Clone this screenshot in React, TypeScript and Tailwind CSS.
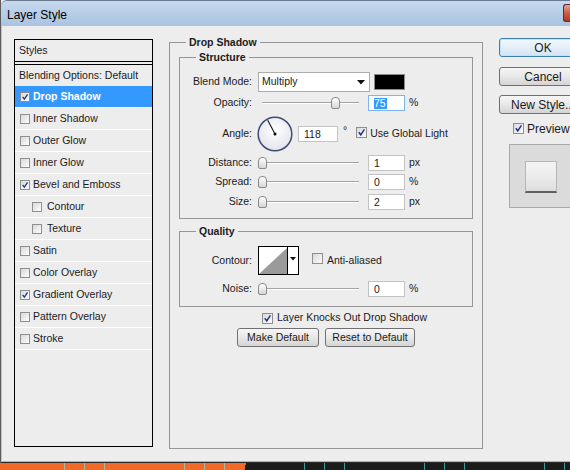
import React from "react";

type StyleRow = { label: string; checked?: boolean; indent?: boolean; active?: boolean };

const styleRows: StyleRow[] = [
  { label: "Drop Shadow", checked: true, active: true },
  { label: "Inner Shadow" },
  { label: "Outer Glow" },
  { label: "Inner Glow" },
  { label: "Bevel and Emboss", checked: true },
  { label: "Contour", indent: true },
  { label: "Texture", indent: true },
  { label: "Satin" },
  { label: "Color Overlay" },
  { label: "Gradient Overlay", checked: true },
  { label: "Pattern Overlay" },
  { label: "Stroke" },
];

function Check({ checked, big }: { checked?: boolean; big?: boolean }) {
  return (
    <span
      className={`inline-flex shrink-0 items-center justify-center border border-[#8e8f8f] bg-linear-to-br from-[#d9d9d9] to-[#fdfdfd] ${
        big ? "w-[11px] h-[11px]" : "w-[10px] h-[10px]"
      }`}
    >
      {checked && (
        <svg viewBox="0 0 10 10" className="w-full h-full">
          <path d="M2 4.8 L4.2 7.6 L8.2 1.6" stroke="#22378a" strokeWidth="1.7" fill="none" />
        </svg>
      )}
    </span>
  );
}

function Slider({ pos }: { pos: number }) {
  return (
    <div className="relative w-[104px] h-[16px] shrink-0">
      <div className="absolute left-[4px] right-[3px] top-[7px] h-[2px] border-t border-[#a3a3a3] border-b border-b-white" />
      <div
        className="absolute top-[2px] w-[9px] h-[12px] rounded-t-[4px] rounded-b-[2px] border border-[#8a8a8a] bg-linear-to-b from-white to-[#d6d6d6]"
        style={{ left: pos }}
      />
    </div>
  );
}

function Field({ children, w = "w-[37px]" }: { children: React.ReactNode; w?: string }) {
  return (
    <div className={`${w} h-[16px] shrink-0 border border-[#c3c3c3] bg-white pl-[5px] leading-[14px]`}>
      {children}
    </div>
  );
}

function Label({ children }: { children: React.ReactNode }) {
  return <div className="w-[72px] shrink-0 text-right mr-[6px]">{children}</div>;
}

function SliderRow({ label, pos, value, unit, className }: { label: string; pos: number; value: string; unit: string; className: string }) {
  return (
    <div className={`flex items-center h-[16px] ${className}`}>
      <Label>{label}</Label>
      <Slider pos={pos} />
      <div className="ml-[6px]">
        <Field>{value}</Field>
      </div>
      <span className="ml-[4px]">{unit}</span>
    </div>
  );
}

function Button({ children, primary, className = "" }: { children: React.ReactNode; primary?: boolean; className?: string }) {
  return (
    <div
      className={`h-[19px] rounded-[3px] border flex items-center justify-center whitespace-nowrap ${
        primary
          ? "border-[#3c7fb1] bg-linear-to-b from-[#f2f8fd] via-[#e4eff9] to-[#d3e4f3] shadow-[inset_0_0_0_1px_#bfe3f8]"
          : "border-[#707070] bg-linear-to-b from-[#f6f6f6] via-[#e8e8e8] to-[#d4d4d4]"
      } ${className}`}
    >
      {children}
    </div>
  );
}

function BottomStrip() {
  const light = [64, 84, 104, 184, 204, 224];
  const dark = [304, 324, 344, 424, 444, 464, 544, 564];
  return (
    <svg width="570" height="7" className="block">
      <rect x="0" y="0" width="245" height="7" fill="#f26a2a" />
      <rect x="245" y="0" width="325" height="7" fill="#1b1b1b" />
      <rect x="243" y="0" width="3" height="2" fill="#f26a2a" />
      {light.map((x) => (
        <rect key={x} x={x} y="0" width="1" height="7" fill="#a9b9a6" />
      ))}
      {dark.map((x) => (
        <rect key={x} x={x} y="0" width="1" height="7" fill="#3b9c98" />
      ))}
    </svg>
  );
}

export default function App() {
  return (
    <div className="w-[570px] h-[470px] overflow-hidden bg-[#ededed] text-[10.5px] text-[#1b1b1b] font-['Liberation_Sans',Arial,sans-serif]">
      <div className="border-l border-[#5c5c5c] h-[463px] flex flex-col">
        {/* Title bar */}
        <div className="h-[26px] shrink-0 flex items-start border-t border-[#6a7b90] rounded-tl-[6px] bg-linear-to-b from-[#c6d9ee] to-[#a9c3e0]">
          <span className="ml-[6px] mt-[5px] text-[12px] text-black">Layer Style</span>
          <div className="ml-auto mt-[3px] w-[7px] h-[18px] shrink-0 rounded-l-[3px] border border-r-0 border-[#5e2b2b] bg-linear-to-b from-[#e7a294] via-[#d25a45] to-[#b8321f]" />
        </div>

        {/* Body */}
        <div className="flex-1 flex items-start pl-[12px] border-l border-[#a9c9e8] border-b border-b-[#7cc4e4]">
          {/* Styles list */}
          <div className="mt-[13px] w-[139px] h-[408px] shrink-0 border border-black bg-[#ededed]">
            <div className="h-[22px] border-b border-black pl-[4px] flex items-center">Styles</div>
            <div className="h-[2px]" />
            <div className="h-[22px] border-t border-black pl-[4px] flex items-center">Blending Options: Default</div>
            {styleRows.map((r) => (
              <div
                key={r.label}
                className={`h-[22px] flex items-center border-b border-white ${r.indent ? "pl-[17px]" : "pl-[5px]"} ${
                  r.active ? "bg-[#3399ff] text-white font-bold" : ""
                }`}
              >
                <Check checked={r.checked} />
                <span className={r.indent ? "ml-[5px]" : "ml-[3px]"}>{r.label}</span>
              </div>
            ))}
          </div>

          {/* Drop Shadow */}
          <fieldset className="ml-[16px] mt-[9px] w-[314px] h-[414px] shrink-0 border border-[#959595] px-[9px] pt-[1px]">
            <legend className="ml-[7px] px-[3px] font-bold leading-[14px]">Drop Shadow</legend>

            <fieldset className="border border-[#959595] pt-[8px] pb-[8px]">
              <legend className="ml-[16px] px-[3px] font-bold leading-[14px]">Structure</legend>

              <div className="flex items-center h-[20px]">
                <Label>Blend Mode:</Label>
                <div className="w-[112px] h-[20px] border border-[#acacac] bg-white flex items-center pl-[3px]">
                  <span className="flex-1">Multiply</span>
                  <svg width="8" height="5" className="mr-[4px]">
                    <path d="M0 0 L8 0 L4 4.5 Z" fill="#111" />
                  </svg>
                </div>
                <div className="ml-[4px] w-[31px] h-[16px] border border-[#8a8a8a] bg-black" />
              </div>

              <div className="flex items-center h-[16px] mt-[3px]">
                <Label>Opacity:</Label>
                <Slider pos={73} />
                <div className="ml-[6px] w-[37px] h-[16px] border border-[#7eb4ea] bg-white pl-[5px] flex items-center">
                  <span className="bg-[#3399ff] text-white leading-[11px] pr-[1px]">75</span>
                </div>
                <span className="ml-[4px]">%</span>
              </div>

              <div className="flex items-center h-[36px] mt-[5px]">
                <Label>Angle:</Label>
                <svg width="36" height="36" viewBox="0 0 36 36" className="shrink-0 -ml-[1px]">
                  <defs>
                    <radialGradient id="dial" cx="50%" cy="40%" r="60%">
                      <stop offset="0" stopColor="#ffffff" />
                      <stop offset="1" stopColor="#e2e4ec" />
                    </radialGradient>
                  </defs>
                  <circle cx="18" cy="18" r="16.8" fill="url(#dial)" stroke="#3f4c76" strokeWidth="1.5" />
                  <line x1="18" y1="18" x2="10.7" y2="4.3" stroke="#111" strokeWidth="1.1" />
                  <circle cx="18" cy="18" r="1.5" fill="#000" />
                </svg>
                <div className="ml-[5px]">
                  <Field w="w-[40px]">118</Field>
                </div>
                <span className="ml-[5px] self-start mt-[9px] leading-[10px]">°</span>
                <div className="ml-[9px]">
                  <Check checked big />
                </div>
                <span className="ml-[3px]">Use Global Light</span>
              </div>

              <SliderRow label="Distance:" pos={0} value="1" unit="px" className="mt-[3px]" />
              <SliderRow label="Spread:" pos={0} value="0" unit="%" className="mt-[3px]" />
              <SliderRow label="Size:" pos={0} value="2" unit="px" className="mt-[4px]" />
            </fieldset>

            <fieldset className="mt-[5px] border border-[#959595] pt-[8px] pb-[9px]">
              <legend className="ml-[16px] px-[3px] font-bold leading-[14px]">Quality</legend>

              <div className="flex items-center h-[29px]">
                <Label>Contour:</Label>
                <div className="w-[41px] h-[29px] shrink-0 border border-black bg-white flex">
                  <svg width="29" height="27" className="block border-r border-black">
                    <path d="M0 27 L29 0 L29 27 Z" fill="#9a9a9a" />
                  </svg>
                  <div className="flex-1 flex items-start justify-center pt-[10px]">
                    <svg width="6" height="4">
                      <path d="M0 0 L6 0 L3 3.5 Z" fill="#111" />
                    </svg>
                  </div>
                </div>
                <div className="ml-[13px]">
                  <Check big />
                </div>
                <span className="ml-[4px]">Anti-aliased</span>
              </div>

              <SliderRow label="Noise:" pos={0} value="0" unit="%" className="mt-[6px]" />
            </fieldset>

            <div className="mt-[5px] h-[12px] flex items-center pl-[83px]">
              <Check checked big />
              <span className="ml-[4px]">Layer Knocks Out Drop Shadow</span>
            </div>

            <div className="mt-[4px] flex justify-center gap-[6px]">
              <Button className="w-[82px]">Make Default</Button>
              <Button className="w-[90px]">Reset to Default</Button>
            </div>
          </fieldset>

          {/* Right column */}
          <div className="ml-[16px] mt-[12px] w-[88px] shrink-0 text-[12px]">
            <Button primary>OK</Button>
            <Button className="mt-[10px]">Cancel</Button>
            <Button className="mt-[9px]">New Style...</Button>
            <div className="mt-[9px] h-[11px] flex items-center pl-[14px]">
              <Check checked big />
              <span className="ml-[3px]">Preview</span>
            </div>
            <div className="mt-[10px] ml-[10px] h-[64px] border border-[#a9a9a9] bg-[#dbdbdb] pt-[16px] pl-[15px]">
              <div className="w-[32px] h-[32px] border border-[#b5b5b5] border-b-2 border-b-[#5f5f5f] bg-linear-to-b from-[#f4f4f4] via-[#ececec] to-[#dedede]" />
            </div>
          </div>
        </div>
        <div className="h-[1px] bg-[#2a2a2a] shrink-0" />
      </div>
      <BottomStrip />
    </div>
  );
}
